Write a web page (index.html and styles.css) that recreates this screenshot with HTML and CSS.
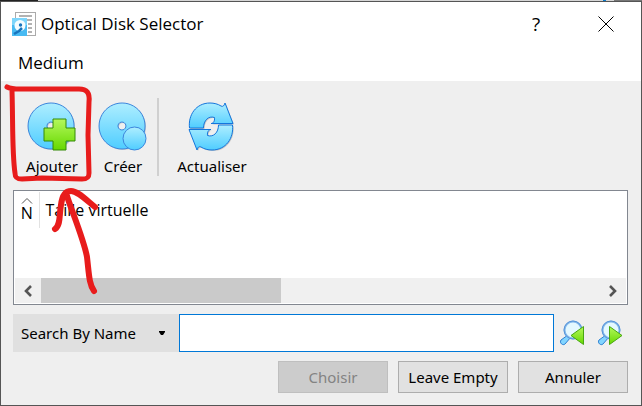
FILE: index.html
```
<!DOCTYPE html>
<html lang="fr">
<head>
<meta charset="utf-8">
<title>Optical Disk Selector</title>
<link rel="stylesheet" href="styles.css">
</head>
<body>
<svg width="0" height="0" class="defs" aria-hidden="true">
  <defs>
    <linearGradient id="blue" x1="0" y1="0" x2="0" y2="1"><stop offset="0" stop-color="#aeeeff"/><stop offset="1" stop-color="#4fcdff"/></linearGradient>
    <linearGradient id="green" x1="0" y1="0" x2="0" y2="1"><stop offset="0" stop-color="#b4f85c"/><stop offset="1" stop-color="#66d800"/></linearGradient>
  </defs>
</svg>
<div class="backdrop"></div>
<div class="dialog">
  <header class="titlebar">
    <svg class="app-icon" width="24" height="24" viewBox="0 0 24 24" aria-hidden="true">
      <rect x="3.5" y=".5" width="20" height="23" fill="#fff" stroke="#aaa"/>
      <path d="M7 4h13M11 8h9M16 12h4M16 16h4M16 20h4" stroke="#999" stroke-width="1.4"/>
      <rect y="6" width="15" height="18" fill="#48baf2"/>
      <path d="M0 6h15v7H0z" fill="#7dd5fb"/>
      <circle cx="8" cy="13.5" r="5.5" fill="#f4fcff"/>
      <circle cx="8.5" cy="13" r="1.7" fill="#1874bd"/>
      <path d="M2 22l5-3 3-3" fill="none" stroke="#1874bd" stroke-width="2.5"/>
    </svg>
    <h1>Optical Disk Selector</h1>
    <button class="caption help" aria-label="Aide">?</button>
    <button class="caption" aria-label="Fermer"><svg width="16" height="16" viewBox="0 0 16 16"><path d="M.5.5l15 15M15.5.5l-15 15" stroke="#000"/></svg></button>
  </header>
  <nav class="menubar"><button>Medium</button></nav>
  <main>
    <div class="toolbar">
      <button class="tool">
        <svg width="50" height="50" viewBox="0 0 50 50" aria-hidden="true">
          <path fill-rule="evenodd" d="M24 1a23 23 0 1 0 .1 0zM24 20a4 4 0 1 1-.1 0z" fill="#999" opacity=".4" transform="translate(1 1)"/>
          <path fill-rule="evenodd" d="M24 1a23 23 0 1 0 .1 0zM24 20a4 4 0 1 1-.1 0z" fill="url(#blue)" stroke="#3b85dc"/>
          <path d="M26 17h13v9h9v13h-9v9H26v-9h-9V26h9z" fill="url(#green)" stroke="#348a08"/>
        </svg>
        <span>Ajouter</span>
      </button>
      <button class="tool">
        <svg width="50" height="50" viewBox="0 0 50 50" aria-hidden="true">
          <path fill-rule="evenodd" d="M24 1a23 23 0 1 0 .1 0zM24 20a4 4 0 1 1-.1 0z" fill="#999" opacity=".4" transform="translate(1 1)"/>
          <path fill-rule="evenodd" d="M24 1a23 23 0 1 0 .1 0zM24 20a4 4 0 1 1-.1 0z" fill="url(#blue)" stroke="#3b85dc"/>
          <circle cx="36.500" cy="36.500" r="11.500" fill="url(#blue)" stroke="#3b85dc"/>
        </svg>
        <span>Créer</span>
      </button>
      <div class="separator"></div>
      <button class="tool wide">
        <svg width="50" height="50" viewBox="0 0 50 50" aria-hidden="true">
          <g id="arrows" fill="#888" opacity=".4" transform="translate(1 1)">
            <path d="M2.500 26C1 13 9 1 23 1c4 0 8 1 11 3 2 1 3 0 4-3l8 20.500H24c2 0 4-2 3.500-6-6-2-11 3-11 10.500z"/>
            <path d="M45.500 23C47 36 39 48 25 48c-4 0-8-1-11-3-2-1-3 0-4 3L2 27.500h22c-2 0-4 2-3.500 6 6 2 11-3 11-10.500z"/>
          </g>
          <g fill="url(#blue)" stroke="#1476dc">
            <path d="M2.500 26C1 13 9 1 23 1c4 0 8 1 11 3 2 1 3 0 4-3l8 20.500H24c2 0 4-2 3.500-6-6-2-11 3-11 10.500z"/>
            <path d="M45.500 23C47 36 39 48 25 48c-4 0-8-1-11-3-2-1-3 0-4 3L2 27.500h22c-2 0-4 2-3.500 6 6 2 11-3 11-10.500z"/>
          </g>
        </svg>
        <span>Actualiser</span>
      </button>
    </div>
    <section class="list">
      <table>
        <thead><tr>
          <th class="name" aria-sort="ascending"><svg width="12" height="6" viewBox="0 0 12 6" aria-hidden="true"><path d="M1 5.500l5-5 5 5" fill="none" stroke="#555"/></svg>N</th>
          <th>Taille virtuelle</th>
        </tr></thead>
      </table>
      <div class="scrollbar">
        <button aria-label="Défiler à gauche"><svg width="10" height="12" viewBox="0 0 10 12"><path d="M8 1L3 6l5 5" fill="none" stroke="#555" stroke-width="2.600"/></svg></button>
        <div class="track"><div class="thumb"></div></div>
        <button aria-label="Défiler à droite"><svg width="10" height="12" viewBox="0 0 10 12"><path d="M2 1l5 5-5 5" fill="none" stroke="#555" stroke-width="2.600"/></svg></button>
      </div>
    </section>
    <div class="search">
      <div class="picker">
        <select aria-label="Type de recherche"><option>Search By Name</option></select>
        <svg width="6" height="4" viewBox="0 0 6 4" aria-hidden="true"><path d="M0 0h6v1L4 4H2L0 1z"/></svg>
      </div>
      <input type="text" aria-label="Recherche">
      <button class="find" aria-label="Précédent"><svg width="26" height="26" viewBox="0 0 26 26">
        <path d="M9 15l-7 5c-2 3 2 6 4 4l6-7z" fill="#82d5ff" stroke="#2c7fd2"/>
        <circle cx="14" cy="10" r="8.500" fill="#e4f8ff" stroke="#83b8ea" stroke-width="2"/><circle cx="14" cy="10" r="9" fill="none" stroke="#4e8cd4" stroke-width=".8"/>
        <path d="M24.500 6.500v18L12 15.500z" fill="url(#green)" stroke="#47a711"/>
      </svg></button>
      <button class="find" aria-label="Suivant"><svg width="26" height="26" viewBox="0 0 26 26">
        <path d="M9 15l-7 5c-2 3 2 6 4 4l6-7z" fill="#82d5ff" stroke="#2c7fd2"/>
        <circle cx="14" cy="10" r="8.500" fill="#e4f8ff" stroke="#83b8ea" stroke-width="2"/><circle cx="14" cy="10" r="9" fill="none" stroke="#4e8cd4" stroke-width=".8"/>
        <path d="M12.500 6.500v18L25 15.500z" fill="url(#green)" stroke="#47a711"/>
      </svg></button>
    </div>
    <footer>
      <button disabled>Choisir</button>
      <button>Leave Empty</button>
      <button>Annuler</button>
    </footer>
  </main>
  <svg class="annotation" width="130" height="220" viewBox="0 80 130 220" aria-hidden="true">
    <g fill="none" stroke="#e81c1c" stroke-linecap="round" stroke-linejoin="round">
      <path d="M7 87c5 3 12 2 22 2h50c8 0 11 4 10 13l-1 33 1 38c0 5-2 6-7 6l-40-1-20 1c-5 0-7-1-7-6-3-20-2-52-3-82" stroke-width="5"/>
      <path d="M55 229c6-4 4-15 6-24 1-9 4-14 10-14s12 6 24 16" stroke-width="6"/>
      <path d="M67 196c4 13 17 44 20 61 2 17 2 27 7 34" stroke-width="6"/>
    </g>
  </svg>
</div>
</body>
</html>
```
FILE: styles.css
```
* { box-sizing: border-box; }
body {
  margin: 0;
  min-height: 100vh;
  display: flex;
  flex-direction: column;
  background: #d5d5d5;
  color: #000;
  font: 15px/20px "Noto Sans", sans-serif;
}
button, input, select { font: inherit; color: inherit; border: 0; padding: 0; margin: 0; background: none; border-radius: 0; }
svg { display: block; flex: none; }
.defs { position: absolute; }
.backdrop {
  height: 1px;
  background: linear-gradient(90deg, #222 38px, #d5d5d5 38px calc(100% - 39px), #0878c8 calc(100% - 39px) calc(100% - 36px), #d5d5d5 calc(100% - 36px) calc(100% - 28px), #777 calc(100% - 28px));
}
.dialog {
  position: relative;
  flex: 1;
  display: flex;
  flex-direction: column;
  border: 1px solid #555;
  background: #efefef;
}
.titlebar { display: flex; align-items: center; height: 44px; padding-left: 11px; background: #fff; }
h1 { margin: 0 auto 0 5px; font: 17px/24px "Open Sans", sans-serif; }
.caption { width: 70px; height: 44px; display: grid; place-items: center; }
.help { font: 19px/24px "Open Sans", sans-serif; }
.menubar { height: 35px; padding-left: 17px; background: #fff; }
.menubar button { font: 17px/34px "Open Sans", sans-serif; }
main { flex: 1; display: flex; flex-direction: column; padding: 17px 13px 12px 12px; }
.toolbar { display: flex; height: 78px; margin-bottom: 14px; }
.tool { width: 72px; padding-top: 4px; margin-left: 3px; display: flex; flex-direction: column; align-items: center; }
.tool span { margin-top: 4px; }
.tool + .tool { width: 68px; margin-left: 1px; }
.tool.wide { width: 84px; margin-left: 11px; }
.separator { width: 2px; background: #d0d0d0; }
.list {
  flex: 1;
  display: flex;
  flex-direction: column;
  justify-content: space-between;
  min-height: 115px;
  padding: 1px;
  border: 1px solid #828790;
  background: #fff;
}
table { border-collapse: collapse; }
th { height: 36px; padding: 0 6px; font: 16px/20px "Open Sans", sans-serif; text-align: left; }
.name { width: 24px; padding: 0; border-right: 1px solid #e2e2e2; text-align: center; }
.name svg { margin: 0 auto -1px; }
.scrollbar { display: flex; height: 25px; background: #f0f0f0; }
.scrollbar button { width: 26px; display: grid; place-items: center; }
.track { flex: 1; }
.thumb { width: 43%; height: 100%; background: #cacaca; }
.search { display: flex; align-items: center; height: 38px; margin: 9px 0; }
.picker { display: flex; align-items: center; width: 166px; height: 38px; padding: 0 14px 0 8px; background: #e0e0e0; }
select { flex: 1; appearance: none; outline: 0; }
input { flex: 1; min-width: 0; height: 38px; padding: 0 6px; border: 1px solid #0078d7; background: #fff; }
.find { margin-left: 5px; }
.find + .find { margin: 0 5px 0 12px; }
footer { display: flex; justify-content: flex-end; gap: 10px; }
footer button { width: 110px; height: 32px; border: 1px solid #adadad; background: #e1e1e1; }
footer button:disabled { border-color: #bfbfbf; background: #ccc; color: #838383; }
.annotation { position: absolute; left: -1px; top: 78px; pointer-events: none; }
```
